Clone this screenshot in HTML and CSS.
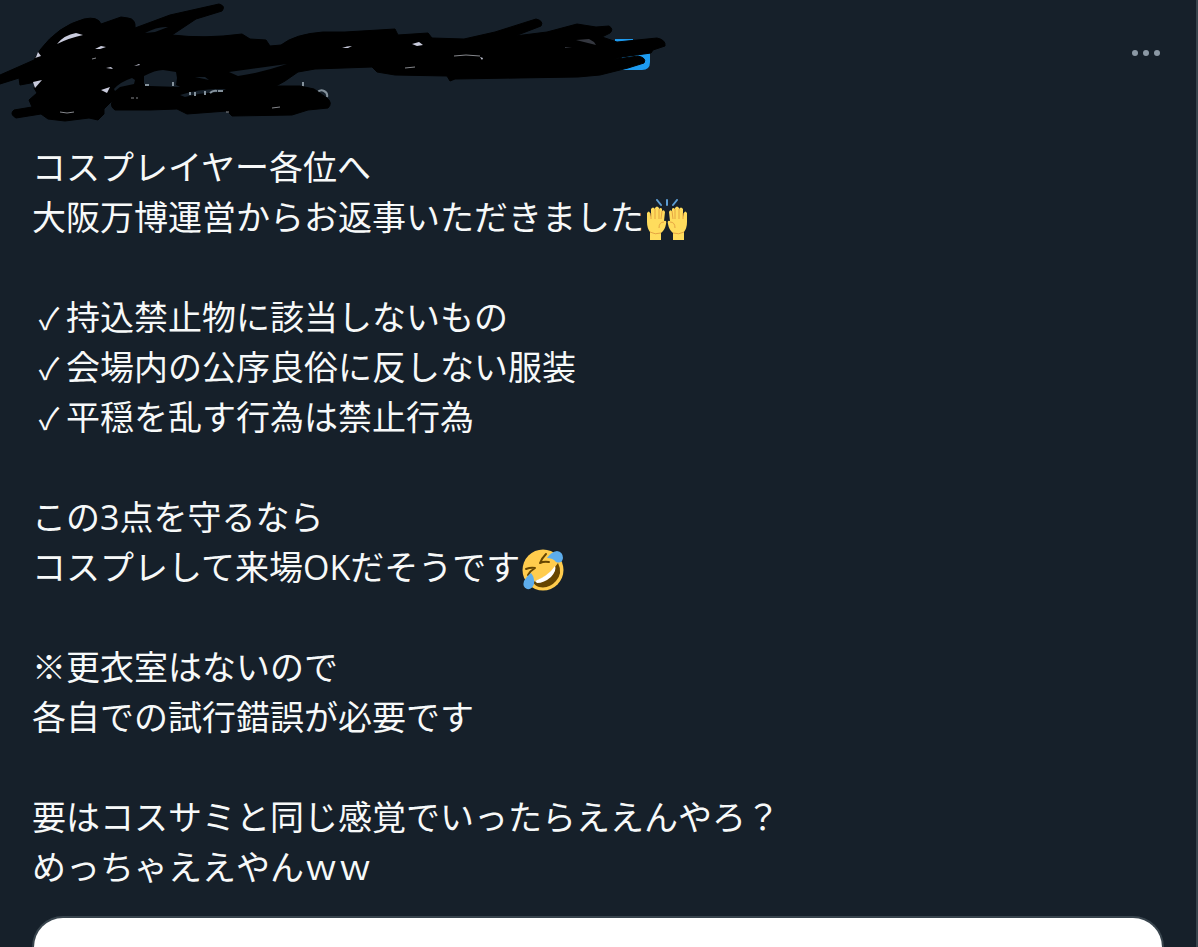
FILE: index.html
```html
<!DOCTYPE html>
<html lang="ja">
<head>
    <meta charset="UTF-8">
    <meta name="viewport" content="width=device-width, initial-scale=1.0">
    <title>ポスト</title>
    <link rel="stylesheet" href="styles.css">
</head>
<body>
    <article class="post">
        <header class="post-header">
            <svg class="scribble" viewBox="0 0 680 130" aria-hidden="true">
                <!-- badge and handle left visible under the ink -->
                <path fill="#1d9bf0" d="M615 39h18v9h-18zM622 57l28-4v9q0 8-8 8h-22z"/>
                <path fill="none" stroke="#84919b" stroke-width="2" d="M144 85h6M173 82v5M303 82v7M317 93q3-4 7-2t3 6"/>
                <!-- ink -->
                <path class="ink-fill" d="M0 75L34 60 40 50 Q58 26 84 19 Q98 16 101 24L121 17 128 18 Q136 19 135 28L170 15 219 4Q226 6 222 11L196 19 172 35Q205 39 242 34L250 39 266 40 270 46 281 45Q295 34 323 32L345 32 395 29 398 35 428 33 432 38 464 39 495 32 536 19Q544 21 541 26L515 36 547 32 577 24 596 27 609 26Q614 29 610 33L602 37 617 42 657 38Q666 40 665 46L653 50 651 53 622 57 609 60 638 56Q647 58 644 63L628 68 600 75 578 77 455 79 450 81 447 76 395 75 377 72 372 67 315 69 298 72 285 81 276 86 300 86 314 89 327 98Q333 103 328 108L308 110 292 115 232 116 227 111 187 114 177 109 150 110 115 110Q109 106 113 100L104 109 104 114 98 120 89 118 65 121 48 119 41 114 16 118Q9 114 14 110L32 107 29 100 37 93 34 88 36 82 20 85 19 78 0 84z"/>
                <!-- gaps between the strokes -->
                <path fill="#16202a" d="M144 76Q155 70 163 70L176 72 177 78 176 85 180 87 150 86 144 84zM114 89Q120 82 132 78L135 80 134 84 120 87 115 91zM229 72L258 68 287 64Q260 73 238 76zM145 33Q158 26 168 27L155 32zM195 77l10 0 4 3zM180 95Q200 88 226 89L220 92Q198 93 185 97z"/>
                <path fill="none" stroke="#84919b" stroke-width="2" d="M173 82v4M145 85h4M190 95v-3M195 96v-4M205 91v4M210 93q3-3 7-2M218 91h5"/>
                <path fill="#c9cbdc" d="M57 44Q64 35 76 33L83 35Q69 38 57 44zM36 57l2-5 3 4-6 2zM33 82l9-2-7 8zM101 90l9-3-3 6zM95 49l6-3 5 1-6 2zM106 68l5-1 2 2zM134 66l5-2 1 1zM342 48q5-2 10-2l-4 2zM412 44l7-2 4 3-6 1zM480 57l3 1-1 2z"/>
                <path fill="#34373f" d="M576 40l13-1 5 3 2 3zM565 47l7 1-7 0z"/>
                <path fill="none" stroke="#85878c" d="M454 56l12-1 14 1M60 112q7 2 14 0M131 98h3M136 98h2M405 68l10-1M272 108l8-1M226 112h3M92 59l4-1"/>
            </svg>
            <button class="more" type="button" aria-label="もっと見る">
                <svg viewBox="0 0 30 8"><circle cx="4" cy="4" r="3"/><circle cx="15" cy="4" r="3"/><circle cx="26" cy="4" r="3"/></svg>
            </button>
        </header>

        <div class="post-text">
            <p>コスプレイヤー各位へ<br>
            大阪万博運営からお返事いただきました<svg class="emoji" viewBox="0 0 42 42" role="img" aria-label="バンザイ">
                <g stroke="#5c9dd3" stroke-width="2" stroke-linecap="round"><path d="M11 1l4 5M21 1v5M31 1l-4 5"/></g>
                <g id="hand">
                    <path fill="#ffdc5d" d="M4 41V33Q1 29 1 23L1 14Q3 11 4 14L5 18 5 10Q7 7 9 10V9Q11 6 13 9V10Q15 8 16 10L16 12Q18 10 19 13L18 22Q21 21 20 25Q19 31 15 34V41z"/>
                    <path fill="none" stroke="#e5a443" d="M5 14V20M9 10V20M13 10V20M16 12L15 20M18 23Q13 23 13 29M4 33Q9 36 15 34"/>
                </g>
                <use href="#hand" transform="translate(42 0) scale(-1 1)"/>
            </svg></p>

            <p><span class="check">✓</span>持込禁止物に該当しないもの<br>
            <span class="check">✓</span>会場内の公序良俗に反しない服装<br>
            <span class="check">✓</span>平穏を乱す行為は禁止行為</p>

            <p>この3点を守るなら<br>
            コスプレして来場OKだそうです<svg class="emoji" viewBox="0 0 42 42" role="img" aria-label="大笑い">
                <circle cx="21" cy="21" r="20.500" fill="#ffcc4d"/>
                <path fill="#664500" d="M36 14Q41 24 34 32Q27 40 17 38Q13 37 11 33Q27 28 36 14z"/>
                <path fill="#fff" d="M33 17Q35 21 29 28Q22 34 15 34L13 32Q26 27 33 17z"/>
                <path fill="none" stroke="#664500" stroke-width="2" stroke-linecap="round" stroke-linejoin="round" d="M4 20Q9 18 13 19Q8 22 6 26M24 5Q20 9 18 14Q22 12 27 13"/>
                <path fill="#5dadec" d="M25 9Q29 3 35 2Q41 3 41 9Q40 15 34 13Q31 9 25 9zM9 24Q13 29 12 35Q10 41 5 40Q0 38 2 32Q4 28 9 24z"/>
            </svg></p>

            <p>※更衣室はないので<br>
            各自での試行錯誤が必要です</p>

            <p>要はコスサミと同じ感覚でいったらええんやろ？<br>
            めっちゃええやんｗｗ</p>
        </div>

        <div class="media"></div>
    </article>
</body>
</html>
```
FILE: styles.css
```css
* {
    box-sizing: border-box;
}

body {
    margin: 0;
    background-color: #16202a;
    color: #f7f9f9;
    font-family: "Open Sans", "Noto Sans CJK JP", sans-serif;
}

.post {
    display: flex;
    flex-direction: column;
    min-height: 100vh;
    padding: 0 32px;
    border-right: 2px solid #38444d;
}

.post-header {
    display: flex;
    justify-content: space-between;
    align-items: flex-start;
    height: 142px;
    margin-left: -32px;
}

.scribble {
    width: 680px;
    height: 130px;
}

.ink-fill {
    fill: #000;
    stroke: #000;
    stroke-linejoin: round;
}

.more {
    margin-top: 41px;
    padding: 8px 3px;
    border: 0;
    background: none;
    cursor: pointer;
}

.more svg {
    display: block;
    width: 30px;
    height: 8px;
    fill: #8b98a5;
}

.post-text {
    font-size: 34px;
    line-height: 50px;
}

.post-text p {
    margin: 0 0 50px;
}

.post-text p:last-child {
    margin-bottom: 24px;
}

.emoji {
    width: 42px;
    height: 42px;
    margin: 0 2px;
    vertical-align: -11px;
}

.check {
    display: inline-block;
    width: 34px;
    font-size: 30px;
    line-height: 1;
    text-align: center;
}

.media {
    flex: 1;
    min-height: 31px;
    border: 2px solid #38444d;
    border-bottom: 0;
    border-radius: 32px 32px 0 0;
    background-color: #fff;
}
```
